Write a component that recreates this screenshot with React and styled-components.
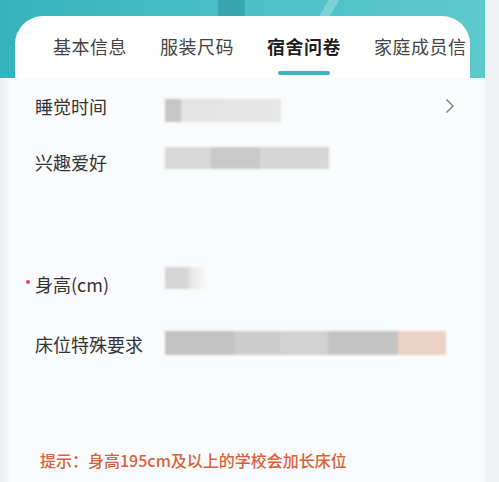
import styled, { createGlobalStyle } from 'styled-components';

const GlobalStyle = createGlobalStyle`
  * { box-sizing: border-box; }
  body {
    margin: 0;
    background: #f1f2f4;
    font-family: "Noto Sans CJK SC", "Noto Sans", sans-serif;
  }
`;

const tabs = ['基本信息', '服装尺码', '宿舍问卷', '家庭成员信'];

const App = () => {
  return (
    <Page>
      <GlobalStyle />
      <Header>
        <TabBar>
          {tabs.map((t) => (
            <Tab key={t} $active={t === '宿舍问卷'}>
              <TabLabel $active={t === '宿舍问卷'}>{t}</TabLabel>
              {t === '宿舍问卷' && <Underline />}
            </Tab>
          ))}
        </TabBar>
      </Header>

      <Content>
        <Row $h={56}>
          <Label>睡觉时间</Label>
          <Value>
            <Blur $w={116} $h={23} $bg="linear-gradient(90deg, #c6c6c6 0 14%, #e4e4e4 14%, #e6e6e6 100%)" style={{ marginTop: 8 }} />
            <Chevron width="10" height="16" viewBox="0 0 10 16">
              <polyline points="1.5,1.5 8,8 1.5,14.5" fill="none" stroke="#777" strokeWidth="1.4" />
            </Chevron>
          </Value>
        </Row>
        <Row $h={56} $extra={64}>
          <Label>兴趣爱好</Label>
          <Value>
            <Blur $w={164} $h={22} $bg="linear-gradient(90deg, #d8d8d8 0 28%, #c9c9c9 28% 58%, #d6d6d6 58% 100%)" style={{ marginTop: -8 }} />
          </Value>
        </Row>
        <Row $h={60}>
          <Label>
            <Dot />
            身高(cm)
          </Label>
          <Value>
            <Blur $w={40} $h={22} $bg="linear-gradient(90deg, #d6d6d6 0 55%, #ececec 70%, #f8f8f8 100%)" style={{ marginTop: -12 }} />
          </Value>
        </Row>
        <Row $h={60}>
          <Label>床位特殊要求</Label>
          <Value>
            <Blur
              $w={281}
              $h={24}
              $bg="linear-gradient(90deg, #c3c3c3 0 25%, #cdcdcd 25% 41%, #d2d2d2 41% 58%, #c4c4c4 58% 83%, #ecd2c4 83% 100%)"
              style={{ marginTop: -3 }}
            />
          </Value>
        </Row>
        <Tip>提示：身高195cm及以上的学校会加长床位</Tip>
      </Content>
    </Page>
  );
};

const Page = styled.div`
  width: 499px;
  height: 482px;
  overflow: hidden;
  background: #f1f2f4;
`;

const Header = styled.div`
  width: 485px;
  height: 78px;
  padding: 16px 15px 0 15px;
  background:
    linear-gradient(90deg, transparent 0 218px, rgba(20, 120, 130, 0.35) 218px 245px, transparent 245px),
    linear-gradient(120deg, transparent 0 62%, rgba(255, 255, 255, 0.25) 62% 64%, transparent 64%),
    linear-gradient(90deg, #35b3bd 0%, #48bfc6 45%, #5ccacc 100%);
`;

const TabBar = styled.div`
  height: 62px;
  display: flex;
  gap: 33px;
  padding: 18px 0 0 38px;
  background: #fff;
  border-radius: 28px 28px 0 0;
  overflow: hidden;
  white-space: nowrap;
`;

const Tab = styled.div`
  display: flex;
  flex-direction: column;
  align-items: center;
  flex-shrink: 0;
`;

const TabLabel = styled.span`
  font-size: 18px;
  line-height: 24px;
  letter-spacing: 0.5px;
  color: ${(p) => (p.$active ? '#1f1f1f' : '#444')};
  font-weight: ${(p) => (p.$active ? 700 : 400)};
`;

const Underline = styled.div`
  width: 52px;
  height: 4px;
  margin-top: 13px;
  border-radius: 2px;
  background: #3cb6bb;
`;

const Content = styled.div`
  width: 485px;
  height: 404px;
  padding: 0 30px 0 35px;
  background: linear-gradient(90deg, #eceef0 0, #fafbfc 12px, #fafbfc 100%);
`;

const Row = styled.div`
  display: grid;
  grid-template-columns: 130px 1fr;
  align-items: center;
  height: ${(p) => p.$h}px;
  margin-bottom: ${(p) => p.$extra || 0}px;
`;

const Label = styled.div`
  position: relative;
  font-size: 18px;
  line-height: 24px;
  color: #333;
  white-space: nowrap;
`;

const Dot = styled.span`
  position: absolute;
  left: -9px;
  top: 8px;
  width: 4px;
  height: 4px;
  border-radius: 50%;
  background: #e0455a;
`;

const Value = styled.div`
  display: flex;
  align-items: center;
  justify-content: space-between;
`;

const Blur = styled.div`
  width: ${(p) => p.$w}px;
  height: ${(p) => p.$h}px;
  background: ${(p) => p.$bg};
  filter: blur(0.8px);
`;

const Chevron = styled.svg`
  display: block;
  margin-right: 0;
`;

const Tip = styled.div`
  margin-top: 74px;
  padding-left: 5px;
  font-size: 16px;
  line-height: 24px;
  font-weight: 500;
  color: #d8613a;
`;

export default App;
